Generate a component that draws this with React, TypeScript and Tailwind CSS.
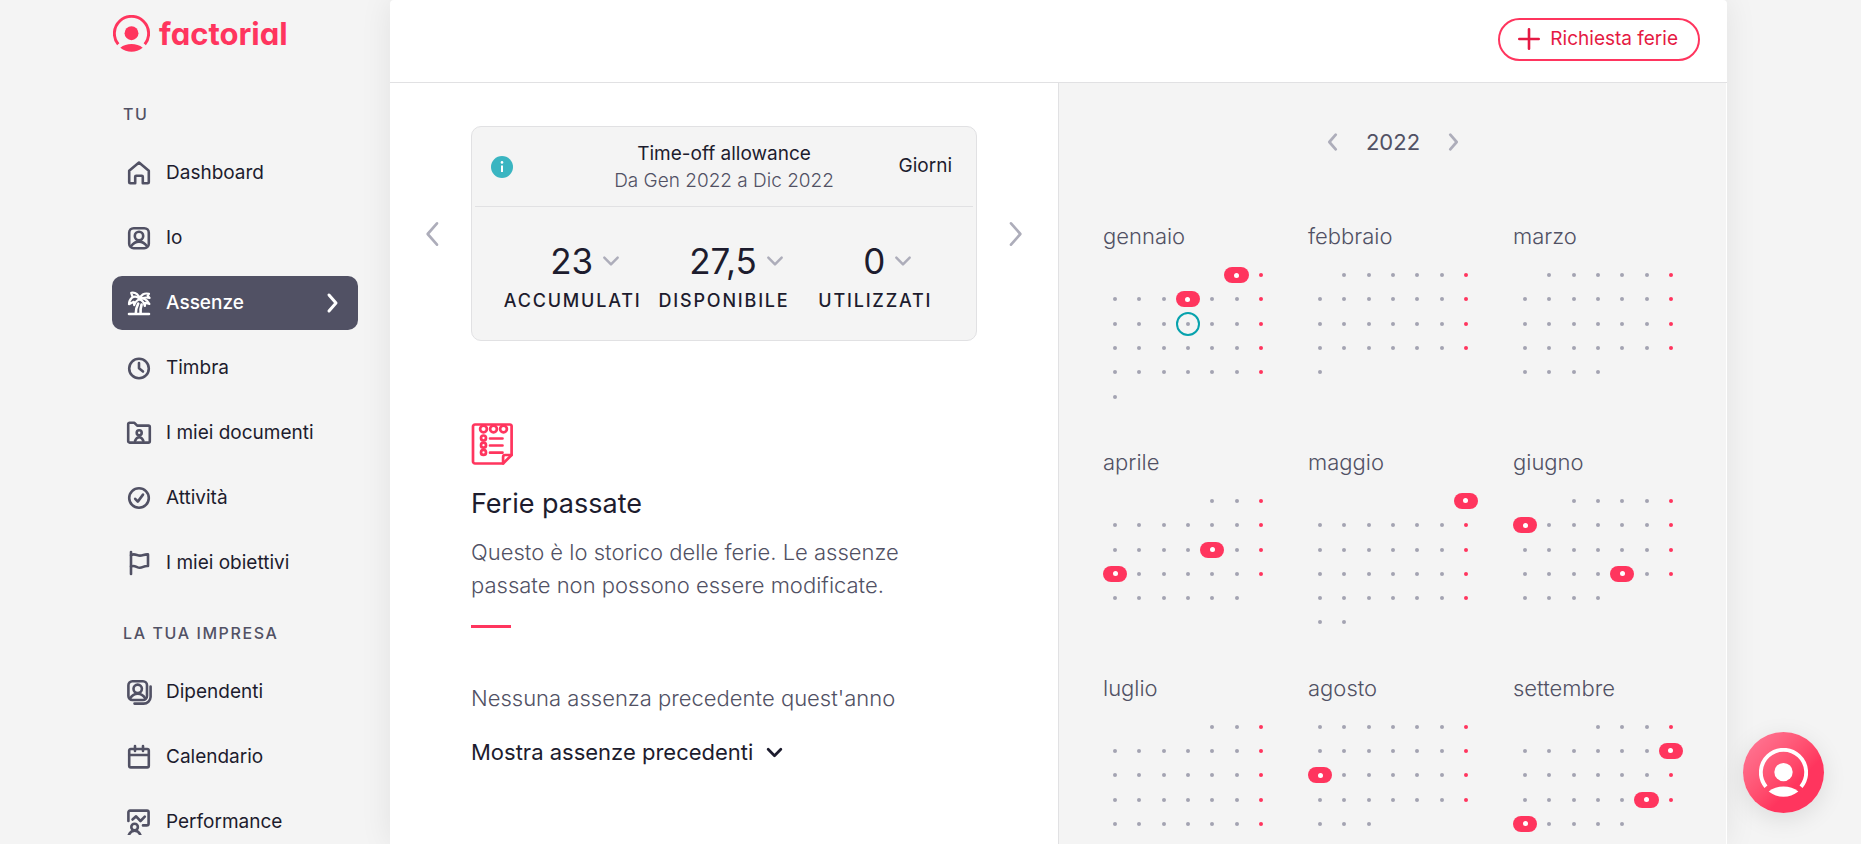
import React from 'react';

interface NavItem {
  label: string;
  icon: React.FC;
  active?: boolean;
}

interface Month {
  name: string;
  offset: number;
  days: number;
  holidays: number[];
  today?: number;
}

const Icon: React.FC<{ children: React.ReactNode }> = ({ children }) => (
  <svg
    width="26"
    height="26"
    viewBox="0 0 26 26"
    fill="none"
    stroke="currentColor"
    strokeWidth="2.6"
    strokeLinecap="round"
    strokeLinejoin="round"
    className="shrink-0"
    aria-hidden="true"
  >
    {children}
  </svg>
);

const HomeIcon = () => (
  <Icon>
    <path d="M3.2 10.8 13 2.6l9.8 8.2v11.4a1 1 0 0 1-1 1h-5v-6.4a1 1 0 0 0-1-1h-5.6a1 1 0 0 0-1 1v6.4h-5a1 1 0 0 1-1-1Z" />
  </Icon>
);

const ProfileIcon = () => (
  <Icon>
    <rect x="3.2" y="3.2" width="19.6" height="20" rx="4.5" />
    <circle cx="13" cy="11" r="4.2" />
    <path d="M5 21.2c2.4-3.2 4.8-4.6 8-4.6s5.6 1.4 8 4.6" />
  </Icon>
);

const PalmIcon = () => (
  <Icon>
    <path d="M3 24h20M9.8 23.5c0-3.8.8-6.8 2.4-9.8M14.6 23.5c-.4-3.8.2-6.6 1-9" />
    <path d="M13.6 9.2C11.5 6.4 8.5 6 5.8 7.8 4.2 9.2 3 11.5 3 14.2l4.800-2.400.4 3.400c1-3.400 2.800-5.200 5.400-6Z" strokeWidth="2.2" />
    <path d="M13.6 9.2c3.2-1.8 7-.6 9.8 4.8l-4-1.2-.6 3.2c-.6-3.400-2.400-5.600-5.200-6.800Z" strokeWidth="2.2" />
    <path d="M13.6 9.2C13 5 10 2 5.2 2.8l1.4 4M13.600 9.200c1-4.200 4.400-6.600 9.400-5.400l-1.400 1.800 2 2.400c-3.600-1-6.600-.6-10 1.200Z" strokeWidth="2.2" />
  </Icon>
);

const ClockIcon = () => (
  <Icon>
    <circle cx="13" cy="13.5" r="9.8" />
    <path d="M13 8v5.2l4 3.3" />
  </Icon>
);

const FolderIcon = () => (
  <Icon>
    <path d="M2.2 4.2a1.4 1.4 0 0 1 1.4-1.4h4.8l2.8 2.8h11.2a1.4 1.4 0 0 1 1.4 1.4v14.2a1.4 1.4 0 0 1-1.4 1.4H3.6a1.4 1.4 0 0 1-1.4-1.400Z" />
    <circle cx="13.2" cy="12.8" r="2.5" />
    <path d="M9 21c.8-2.4 2-3.8 4.2-3.8s3.4 1.4 4.2 3.800" />
  </Icon>
);

const CheckIcon = () => (
  <Icon>
    <circle cx="13" cy="13" r="9.8" />
    <path d="m9.2 13.8 2.6 2.8 5.2-7" />
  </Icon>
);

const FlagIcon = () => (
  <Icon>
    <path d="M5 24V2" />
    <path d="M5 5.2C8 3 11 5.6 14 5.6c3 0 4.6-1.6 8-1.2V16c-4-.6-5 1.8-8.2 1.8S9 14.6 5 16.4" />
  </Icon>
);

const PeopleIcon = () => (
  <Icon>
    <rect x="2.4" y="2.2" width="18.6" height="18.8" rx="4" />
    <circle cx="11.7" cy="9.8" r="4.2" />
    <path d="M4.2 19.2c2-3 4.2-4.4 7.5-4.4s5.5 1.4 7.5 4.4" />
    <path d="M24.6 7.5V18a7 7 0 0 1-7 6.6H8.5" />
  </Icon>
);

const CalendarIcon = () => (
  <Icon>
    <rect x="3.2" y="5" width="19.6" height="18.4" rx="1.6" />
    <path d="M3.2 11h19.6M9 2v5M17 2v5" />
  </Icon>
);

const PerformanceIcon = () => (
  <Icon>
    <path d="M2.4 12V3.2a1.6 1.6 0 0 1 1.6-1.6h17a1.6 1.6 0 0 1 1.6 1.6v11.2a2 2 0 0 1-2 2H17" />
    <path d="m6.5 10.5 3.6-3.2L14.5 12l4.3-4.4" />
    <circle cx="8.6" cy="18" r="3.3" />
    <path d="M2.6 26.4c1.2-3 3.2-4.8 6-4.8s4.8 1.8 6 4.8" />
  </Icon>
);

const Chevron: React.FC<{ direction: 'left' | 'right' | 'down'; size: number; stroke?: number }> = ({
  direction,
  size,
  stroke = 2
}) => {
  const paths = {
    left: 'M15 4 8 12l7 8',
    right: 'm9 4 7 8-7 8',
    down: 'm4 8 8 8 8-8'
  };
  return (
    <svg
      width={size}
      height={size}
      viewBox="0 0 24 24"
      fill="none"
      stroke="currentColor"
      strokeWidth={stroke}
      strokeLinecap="round"
      strokeLinejoin="round"
      className="shrink-0"
      aria-hidden="true"
    >
      <path d={paths[direction]} />
    </svg>
  );
};

const BrandMark: React.FC<{ size: number }> = ({ size }) => (
  <svg width={size} height={size} viewBox="0 0 48 48" className="shrink-0" aria-hidden="true">
    <path d="M6.8 38A22.2 22.2 0 1 1 41.2 38" fill="none" stroke="currentColor" strokeWidth="3.8" />
    <circle cx="24" cy="23.6" r="9" fill="currentColor" />
    <path d="M9.5 42.5C17 36 31 36 38.5 42.5 30 49.5 18 49.5 9.5 42.5Z" fill="currentColor" />
  </svg>
);

const personalItems: NavItem[] = [
  { label: 'Dashboard', icon: HomeIcon },
  { label: 'Io', icon: ProfileIcon },
  { label: 'Assenze', icon: PalmIcon, active: true },
  { label: 'Timbra', icon: ClockIcon },
  { label: 'I miei documenti', icon: FolderIcon },
  { label: 'Attività', icon: CheckIcon },
  { label: 'I miei obiettivi', icon: FlagIcon }
];

const companyItems: NavItem[] = [
  { label: 'Dipendenti', icon: PeopleIcon },
  { label: 'Calendario', icon: CalendarIcon },
  { label: 'Performance', icon: PerformanceIcon }
];

const allowance = [
  { value: '23', label: 'Accumulati' },
  { value: '27,5', label: 'Disponibile' },
  { value: '0', label: 'Utilizzati' }
];

// offset = empty cells before day 1, weeks start on Monday
const months: Month[] = [
  { name: 'gennaio', offset: 5, days: 31, holidays: [1, 6], today: 13 },
  { name: 'febbraio', offset: 1, days: 28, holidays: [] },
  { name: 'marzo', offset: 1, days: 31, holidays: [] },
  { name: 'aprile', offset: 4, days: 30, holidays: [15, 18] },
  { name: 'maggio', offset: 6, days: 31, holidays: [1] },
  { name: 'giugno', offset: 2, days: 30, holidays: [6, 24] },
  { name: 'luglio', offset: 4, days: 31, holidays: [] },
  { name: 'agosto', offset: 0, days: 31, holidays: [15] },
  { name: 'settembre', offset: 3, days: 30, holidays: [11, 24, 26] }
];

const NavGroup: React.FC<{ title: string; items: NavItem[] }> = ({ title, items }) => (
  <div>
    <h2 className="pl-[11px] text-base leading-6 font-medium tracking-widest text-[#515164] uppercase">{title}</h2>
    <ul className="mt-5 flex flex-col gap-[11px]">
      {items.map((item) => (
        <li key={item.label}>
          <a
            href="#"
            className={`flex h-[54px] items-center gap-[14px] rounded-[10px] px-[14px] text-[19px] ${
              item.active ? 'bg-[#515164] font-medium text-white' : 'text-[#515164]'
            }`}
          >
            <item.icon />
            <span className={item.active ? 'flex-1' : 'flex-1 text-[#1d1c2e]'}>{item.label}</span>
            {item.active && <Chevron direction="right" size={24} stroke={3} />}
          </a>
        </li>
      ))}
    </ul>
  </div>
);

const MonthGrid: React.FC<{ month: Month }> = ({ month }) => (
  <section>
    <h3 className="text-[22px] leading-8 font-light text-[#515164]">{month.name}</h3>
    <div className="mt-[11px] grid grid-cols-7">
      {Array.from({ length: month.offset }, (_, i) => (
        <span key={`empty-${i}`} className="aspect-square" />
      ))}
      {Array.from({ length: month.days }, (_, i) => {
        const day = i + 1;
        const isSunday = (month.offset + i) % 7 === 6;
        const isHoliday = month.holidays.includes(day);
        return (
          <span
            key={day}
            className={`flex aspect-square items-center justify-center ${
              day === month.today ? 'rounded-full border-2 border-[#07a2ad]' : ''
            }`}
          >
            {isHoliday ? (
              <span className="flex h-4 w-full items-center justify-center rounded-full bg-[#ff355e]">
                <span className="size-[5px] rounded-full bg-white" />
              </span>
            ) : (
              <span className={isSunday ? 'size-1 rounded-full bg-[#ff355e]' : 'size-1 rounded-full bg-[#a3a3b2]'} />
            )}
          </span>
        );
      })}
    </div>
  </section>
);

export default function App() {
  return (
    <div className="flex h-screen overflow-hidden bg-[#f4f4f4] pr-[134px] pl-[112px] font-['Inter',sans-serif] text-[#1d1c2e]">
      <aside className="w-[278px] shrink-0 pr-8">
        <a href="#" className="mt-[15px] flex items-center gap-[9px] pl-px text-[#ff355e]">
          <BrandMark size={37} />
          <span className="text-[31px] leading-9 font-bold [font-feature-settings:'cv11']">factorial</span>
        </a>
        <nav className="mt-[50px] flex flex-col gap-[31px]">
          <NavGroup title="Tu" items={personalItems} />
          <NavGroup title="La tua impresa" items={companyItems} />
        </nav>
      </aside>

      <main className="flex min-w-0 flex-1 flex-col rounded-t bg-white shadow-[0_0_32px_rgba(0,0,0,0.08)]">
        <header className="flex h-[83px] shrink-0 items-center justify-end border-b border-[#e1e1e3] px-[27px] pb-1">
          <button className="flex h-[43px] items-center gap-[10px] rounded-full border-2 border-[#ff355e] pr-5 pl-[18px] text-[19px] text-[#e51943]">
            <svg width="22" height="22" viewBox="0 0 22 22" stroke="currentColor" strokeWidth="2.6" strokeLinecap="round" aria-hidden="true">
              <path d="M11 1.3v19.4M1.3 11h19.4" />
            </svg>
            Richiesta ferie
          </button>
        </header>

        <div className="grid flex-1 grid-cols-2 pr-px">
          <div className="pt-[43px]">
            <div className="flex items-center gap-7 px-[33px]">
              <button aria-label="Precedente" className="flex w-5 justify-center text-[#adadba]">
                <Chevron direction="left" size={32} />
              </button>
              <section className="flex-1 rounded-[10px] border border-[#e1e1e3] bg-[#f4f4f4]">
                <div className="mx-[3px] grid h-20 grid-cols-[1fr_auto_1fr] items-center border-b border-[#e1e1e3] px-4">
                  <svg width="22" height="22" viewBox="0 0 22 22" aria-hidden="true">
                    <circle cx="11" cy="11" r="11" fill="#3ab5c1" />
                    <circle cx="11" cy="6.4" r="1.3" fill="white" />
                    <path d="M11 9.5v6.5" stroke="white" strokeWidth="2" />
                  </svg>
                  <div className="text-center text-[19px] leading-[27px]">
                    <h2>Time-off allowance</h2>
                    <p className="font-light text-[#515164]">Da Gen 2022 a Dic 2022</p>
                  </div>
                  <span className="pr-[5px] text-right text-[19px]">Giorni</span>
                </div>
                <div className="grid grid-cols-3 px-[25px] pt-8 pb-[25px]">
                  {allowance.map((item) => (
                    <div key={item.label} className="flex flex-col items-center">
                      <button className="flex items-center gap-2 pl-[26px] text-[35px] leading-[44px]">
                        {item.value}
                        <span className="text-[#adadba]">
                          <Chevron direction="down" size={20} stroke={3} />
                        </span>
                      </button>
                      <span className="mt-1 text-lg leading-7 font-medium tracking-widest uppercase">{item.label}</span>
                    </div>
                  ))}
                </div>
              </section>
              <button aria-label="Successivo" className="flex w-5 justify-center text-[#adadba]">
                <Chevron direction="right" size={32} />
              </button>
            </div>

            <section className="mt-[82px] px-[81px]">
              <svg width="42" height="42" viewBox="0 0 42 42" fill="none" stroke="#ff355e" strokeWidth="2.7" strokeLinecap="round" strokeLinejoin="round" aria-hidden="true">
                <path d="M4 1.5h35a1.6 1.6 0 0 1 1.6 1.6V32l-8.5 8.5H4a2 2 0 0 1-2-2v-35a2 2 0 0 1 2-2Z" />
                <path d="M40.6 32h-6.5a2 2 0 0 0-2 2v6.5" />
                <circle cx="12.5" cy="6" r="3.4" />
                <circle cx="22.5" cy="6" r="3.4" />
                <circle cx="32.5" cy="6" r="3.4" />
                <circle cx="12.5" cy="15" r="2.5" />
                <circle cx="12.5" cy="22.2" r="2.5" />
                <circle cx="12.5" cy="29.4" r="2.5" />
                <path d="M19 15.5h12.5M19 22.5h12.5M19 29.7h12.5" />
              </svg>
              <h2 className="mt-[21px] text-[27px] leading-9">Ferie passate</h2>
              <p className="mt-[14px] max-w-[440px] text-[22px] leading-[33px] font-light text-[#515164]">
                Questo è lo storico delle ferie. Le assenze passate non possono essere modificate.
              </p>
              <div className="mt-[23px] h-[3px] w-10 bg-[#ff355e]" />
              <p className="mt-[54px] text-[22px] leading-[33px] font-light text-[#515164]">
                Nessuna assenza precedente quest'anno
              </p>
              <button className="mt-[21px] flex items-center gap-3 text-[22px] leading-[33px]">
                Mostra assenze precedenti
                <Chevron direction="down" size={19} stroke={3.5} />
              </button>
            </section>
          </div>

          <div className="border-l border-[#e1e1e3] bg-[#f4f4f4] pt-[43px] pr-[43px] pl-11">
            <div className="flex items-center justify-center gap-[22px] text-[22px] leading-8 text-[#515164]">
              <button aria-label="Anno precedente" className="text-[#adadba]">
                <Chevron direction="left" size={22} stroke={3} />
              </button>
              2022
              <button aria-label="Anno successivo" className="text-[#adadba]">
                <Chevron direction="right" size={22} stroke={3} />
              </button>
            </div>
            <div className="mt-[62px] grid grid-cols-3 gap-x-[35px] gap-y-[37px]">
              {months.map((month) => (
                <MonthGrid key={month.name} month={month} />
              ))}
            </div>
          </div>
        </div>
      </main>

      <button
        aria-label="Assistenza"
        className="fixed right-[37px] bottom-[31px] flex size-[81px] items-center justify-center rounded-full bg-linear-to-br from-[#ff7391] from-10% to-[#ff355e] to-65% text-white shadow-[0_6px_24px_rgba(0,0,0,0.1)]"
      >
        <BrandMark size={49} />
      </button>
    </div>
  );
}
